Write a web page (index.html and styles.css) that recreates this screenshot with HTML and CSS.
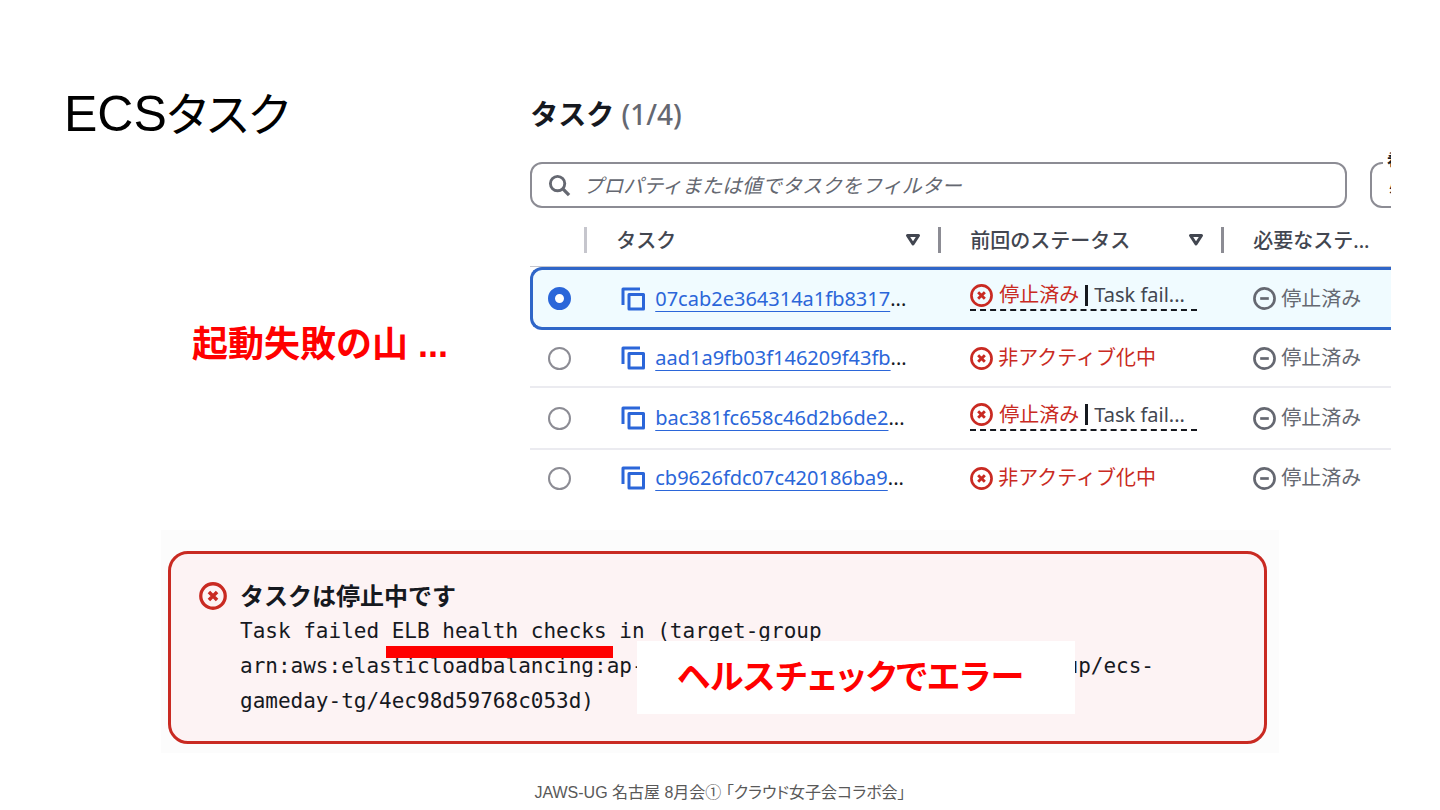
FILE: index.html
```
<!DOCTYPE html>
<html lang="ja">
<head>
    <meta charset="UTF-8">
    <meta name="viewport" content="width=device-width, initial-scale=1.0">
    <title>ECSタスク</title>
    <link rel="stylesheet" href="styles.css">
</head>
<body>
    <!-- shared icons -->
    <svg class="sprite" aria-hidden="true">
        <symbol id="copy" viewBox="0 0 24 24">
            <path d="M2 18V2H19M8 7.500H22.500V22H8Z" fill="none" stroke="currentColor" stroke-width="3" stroke-linejoin="round"/>
        </symbol>
        <symbol id="error" viewBox="0 0 24 24">
            <circle cx="12" cy="12" r="10.500" fill="none" stroke="currentColor" stroke-width="2.800"/>
            <path d="M8.500 8.500L15.500 15.500M15.500 8.500L8.500 15.500" stroke="currentColor" stroke-width="3"/>
        </symbol>
        <symbol id="stopped" viewBox="0 0 24 24">
            <circle cx="12" cy="12" r="10.500" fill="none" stroke="currentColor" stroke-width="2.800"/>
            <path d="M7.500 12H16.500" stroke="currentColor" stroke-width="2.800"/>
        </symbol>
        <symbol id="sort" viewBox="0 0 16 14">
            <path d="M2.500 2.500H13.500L8 11Z" fill="none" stroke="currentColor" stroke-width="3" stroke-linejoin="round"/>
        </symbol>
    </svg>

    <main class="slide">
        <section class="top">
            <div class="intro">
                <h1>ECS<span class="kana">タスク</span></h1>
                <p class="callout">起動失敗の山 ...</p>
            </div>

            <div class="panel">
                <h2>タスク <span class="count">(1/4)</span></h2>
                <div class="filters">
                    <label class="search">
                        <svg viewBox="0 0 24 24" aria-hidden="true">
                            <circle cx="10" cy="10" r="7.500" fill="none" stroke="currentColor" stroke-width="3"/>
                            <path d="M15.500 15.500L22 22" stroke="currentColor" stroke-width="3.500"/>
                        </svg>
                        <input type="search" placeholder="プロパティまたは値でタスクをフィルター" aria-label="タスクをフィルター">
                    </label>
                    <div class="status-filter">
                        <label for="status">希</label>
                        <select id="status"><option>必</option></select>
                    </div>
                </div>

                <table>
                    <colgroup>
                        <col class="col-radio">
                        <col class="col-task">
                        <col class="col-last">
                        <col>
                    </colgroup>
                    <thead>
                        <tr>
                            <th><div class="head light"></div></th>
                            <th><div class="head">タスク<svg class="sort"><use href="#sort"/></svg></div></th>
                            <th><div class="head">前回のステータス<svg class="sort"><use href="#sort"/></svg></div></th>
                            <th><div class="head">必要なステ...</div></th>
                        </tr>
                    </thead>
                    <tbody>
                        <tr class="selected">
                            <td><input type="radio" name="task" aria-label="07cab2e364314a1fb8317" checked></td>
                            <td><div class="task"><svg class="icon copy"><use href="#copy"/></svg><span><a href="#">07cab2e364314a1fb8317</a>...</span></div></td>
                            <td class="with-reason"><div class="reason"><svg class="icon red"><use href="#error"/></svg><span class="red">停止済み</span><span class="bar"></span><span>Task fail...</span></div></td>
                            <td><div class="status"><svg class="icon"><use href="#stopped"/></svg>停止済み</div></td>
                        </tr>
                        <tr>
                            <td><input type="radio" name="task" aria-label="aad1a9fb03f146209f43fb"></td>
                            <td><div class="task"><svg class="icon copy"><use href="#copy"/></svg><span><a href="#">aad1a9fb03f146209f43fb</a>...</span></div></td>
                            <td><div class="status red"><svg class="icon"><use href="#error"/></svg>非アクティブ化中</div></td>
                            <td><div class="status"><svg class="icon"><use href="#stopped"/></svg>停止済み</div></td>
                        </tr>
                        <tr class="tall">
                            <td><input type="radio" name="task" aria-label="bac381fc658c46d2b6de2"></td>
                            <td><div class="task"><svg class="icon copy"><use href="#copy"/></svg><span><a href="#">bac381fc658c46d2b6de2</a>...</span></div></td>
                            <td class="with-reason"><div class="reason"><svg class="icon red"><use href="#error"/></svg><span class="red">停止済み</span><span class="bar"></span><span>Task fail...</span></div></td>
                            <td><div class="status"><svg class="icon"><use href="#stopped"/></svg>停止済み</div></td>
                        </tr>
                        <tr>
                            <td><input type="radio" name="task" aria-label="cb9626fdc07c420186ba9"></td>
                            <td><div class="task"><svg class="icon copy"><use href="#copy"/></svg><span><a href="#">cb9626fdc07c420186ba9</a>...</span></div></td>
                            <td><div class="status red"><svg class="icon"><use href="#error"/></svg>非アクティブ化中</div></td>
                            <td><div class="status"><svg class="icon"><use href="#stopped"/></svg>停止済み</div></td>
                        </tr>
                    </tbody>
                </table>
            </div>
        </section>

        <section class="alert-wrap">
            <div class="alert">
                <svg class="alert-icon"><use href="#error"/></svg>
                <div class="message">
                    <h3>タスクは停止中です</h3>
                    <p>Task failed <span class="marked">ELB health checks</span> in (target-group</p>
                    <p class="arn"><span>arn:aws:elasticloadbalancing:ap-</span><span>up/ecs-</span></p>
                    <p>gameday-tg/4ec98d59768c053d)</p>
                </div>
                <div class="cover">ヘルスチェックでエラー</div>
            </div>
        </section>

        <footer>JAWS-UG 名古屋 8月会① 「クラウド女子会コラボ会」</footer>
    </main>
</body>
</html>
```
FILE: styles.css
```
* {
    box-sizing: border-box;
    margin: 0;
    padding: 0;
}

body {
    background: #fff;
    color: #16191f;
    font-family: "Noto Sans", "Noto Sans CJK JP", sans-serif;
    font-size: 20px;
}

.sprite {
    display: none;
}

.slide {
    display: flex;
    flex-direction: column;
    min-height: 100vh;
    overflow: hidden;
}

.top {
    display: grid;
    grid-template-columns: 13fr 24fr;
    padding: 84px 49px 0 64px;
}

/* Left side */
h1 {
    color: #000;
    font-family: "Liberation Sans", "Noto Sans CJK JP", sans-serif;
    font-size: 50px;
    font-weight: 400;
    line-height: 60px;
}

.kana {
    font-size: 46px;
    font-feature-settings: "palt";
}

.callout {
    margin: 173px 0 0 128px;
    color: #f00;
    font-family: "Liberation Sans", "Noto Sans CJK JP", sans-serif;
    font-size: 36px;
    font-weight: 700;
    line-height: 54px;
}

/* Task list */
.panel {
    overflow: hidden;
    min-width: 0;
}

h2 {
    font-size: 28px;
    line-height: 60px;
}

.count {
    color: #656871;
    font-weight: 500;
}

.filters {
    display: grid;
    grid-template-columns: 1fr 21px;
    gap: 23px;
    margin-top: 18px;
}

.search {
    display: flex;
    align-items: center;
    gap: 12px;
    height: 46px;
    padding: 0 16px;
    border: 2px solid #8c8c94;
    border-radius: 12px;
    color: #656871;
}

.search svg {
    flex: none;
    width: 23px;
    height: 23px;
}

.search input {
    flex: 1;
    border: none;
    outline: none;
    background: none;
    font: inherit;
}

.search input::placeholder {
    color: #656871;
    font-style: italic;
}

.status-filter {
    position: relative;
}

.status-filter select {
    appearance: none;
    width: 200px;
    height: 46px;
    padding-left: 17px;
    border: 2px solid #8c8c94;
    border-radius: 12px;
    background: #fff;
    color: #16191f;
    font: inherit;
}

.status-filter label {
    position: absolute;
    top: -12px;
    left: 13px;
    padding: 0 4px;
    background: #fff;
    font-size: 16px;
    font-weight: 700;
    line-height: 20px;
}

table {
    width: 100%;
    table-layout: fixed;
    border-collapse: separate;
    border-spacing: 0;
}

.col-radio {
    width: 57px;
}

.col-task {
    width: 354px;
}

.col-last {
    width: 283px;
}

th {
    height: 59px;
    padding-top: 5px;
    border-bottom: 1px solid #c6c6cd;
    color: #424650;
    font-weight: 500;
    text-align: left;
}

.head {
    display: flex;
    align-items: center;
    justify-content: space-between;
    height: 26px;
    padding: 0 17px 0 29px;
    border-right: 3px solid #8c8c94;
    white-space: nowrap;
}

.head.light {
    border-color: #c6c6cd;
}

th:last-child .head {
    border: none;
    padding-right: 0;
}

.sort {
    width: 16px;
    height: 14px;
}

td {
    height: 58px;
    padding-left: 29px;
    border-bottom: 2px solid #ebebf0;
    white-space: nowrap;
}

td:first-child {
    padding-left: 18px;
}

.tall td {
    height: 62px;
}

tr:last-child td {
    height: 56px;
    border-bottom: none;
}

.selected td {
    height: 63px;
    border-top: 3px solid #2f66c8;
    border-bottom: 3px solid #2f66c8;
    background: #f0fbff;
}

.selected td:first-child {
    padding-left: 15px;
    border-left: 3px solid #2f66c8;
    border-radius: 12px 0 0 12px;
}

input[type="radio"] {
    appearance: none;
    display: block;
    width: 23px;
    height: 23px;
    border: 2px solid #8c8c94;
    border-radius: 50%;
    background: #fff;
}

input[type="radio"]:checked {
    border: 7px solid #2b66d9;
}

.task,
.status,
.reason {
    display: flex;
    align-items: center;
    line-height: 28px;
}

.icon {
    flex: none;
    width: 23px;
    height: 23px;
}

.task {
    gap: 10px;
    padding-left: 5px;
}

.copy {
    width: 24px;
    height: 24px;
    color: #2b66d9;
}

a {
    color: #2b66d9;
    text-decoration: underline;
    text-decoration-thickness: 1px;
    text-underline-offset: 5px;
}

.status {
    gap: 5px;
    color: #656871;
}

.red,
.status.red {
    color: #c92a22;
}

.with-reason {
    padding-bottom: 5px;
}

.reason {
    gap: 6px;
    width: 227px;
    border-bottom: 2px dashed #16191f;
    color: #424650;
}

.bar {
    width: 3px;
    height: 21px;
    background: #16191f;
}

/* Error message */
.alert-wrap {
    margin: 24px 161px 0;
    padding: 21px 12px 9px 7px;
    background: #fcfcfc;
}

.alert {
    position: relative;
    display: flex;
    gap: 13px;
    padding: 24px 28px 22px;
    border: 3px solid #c92a22;
    border-radius: 20px;
    background: #fdf3f4;
}

.message {
    flex: 1;
}

.alert-icon {
    flex: none;
    width: 28px;
    height: 28px;
    margin-top: 4px;
    color: #c92a22;
}

h3 {
    font-size: 24px;
    line-height: 36px;
}

.alert p {
    font-family: "DejaVu Sans Mono", monospace;
    font-size: 21px;
    line-height: 35px;
    white-space: nowrap;
}

.marked {
    position: relative;
}

.marked::after {
    content: "";
    position: absolute;
    right: -6px;
    bottom: -15px;
    left: -6px;
    height: 12px;
    background: #f00;
}

.arn {
    display: flex;
    justify-content: space-between;
    padding-right: 82px;
}

.cover {
    position: absolute;
    top: 87px;
    right: 189px;
    width: 438px;
    height: 73px;
    padding-left: 40px;
    background: #fff;
    color: #f00;
    font-family: "Noto Sans CJK JP", sans-serif;
    font-size: 34px;
    font-weight: 700;
    font-feature-settings: "palt";
    line-height: 68px;
    white-space: nowrap;
}

footer {
    margin: 28px 0 4px;
    color: #595959;
    font-family: "Liberation Sans", "Noto Sans CJK JP", sans-serif;
    font-size: 16px;
    font-feature-settings: "palt";
    line-height: 24px;
    text-align: center;
}
```
